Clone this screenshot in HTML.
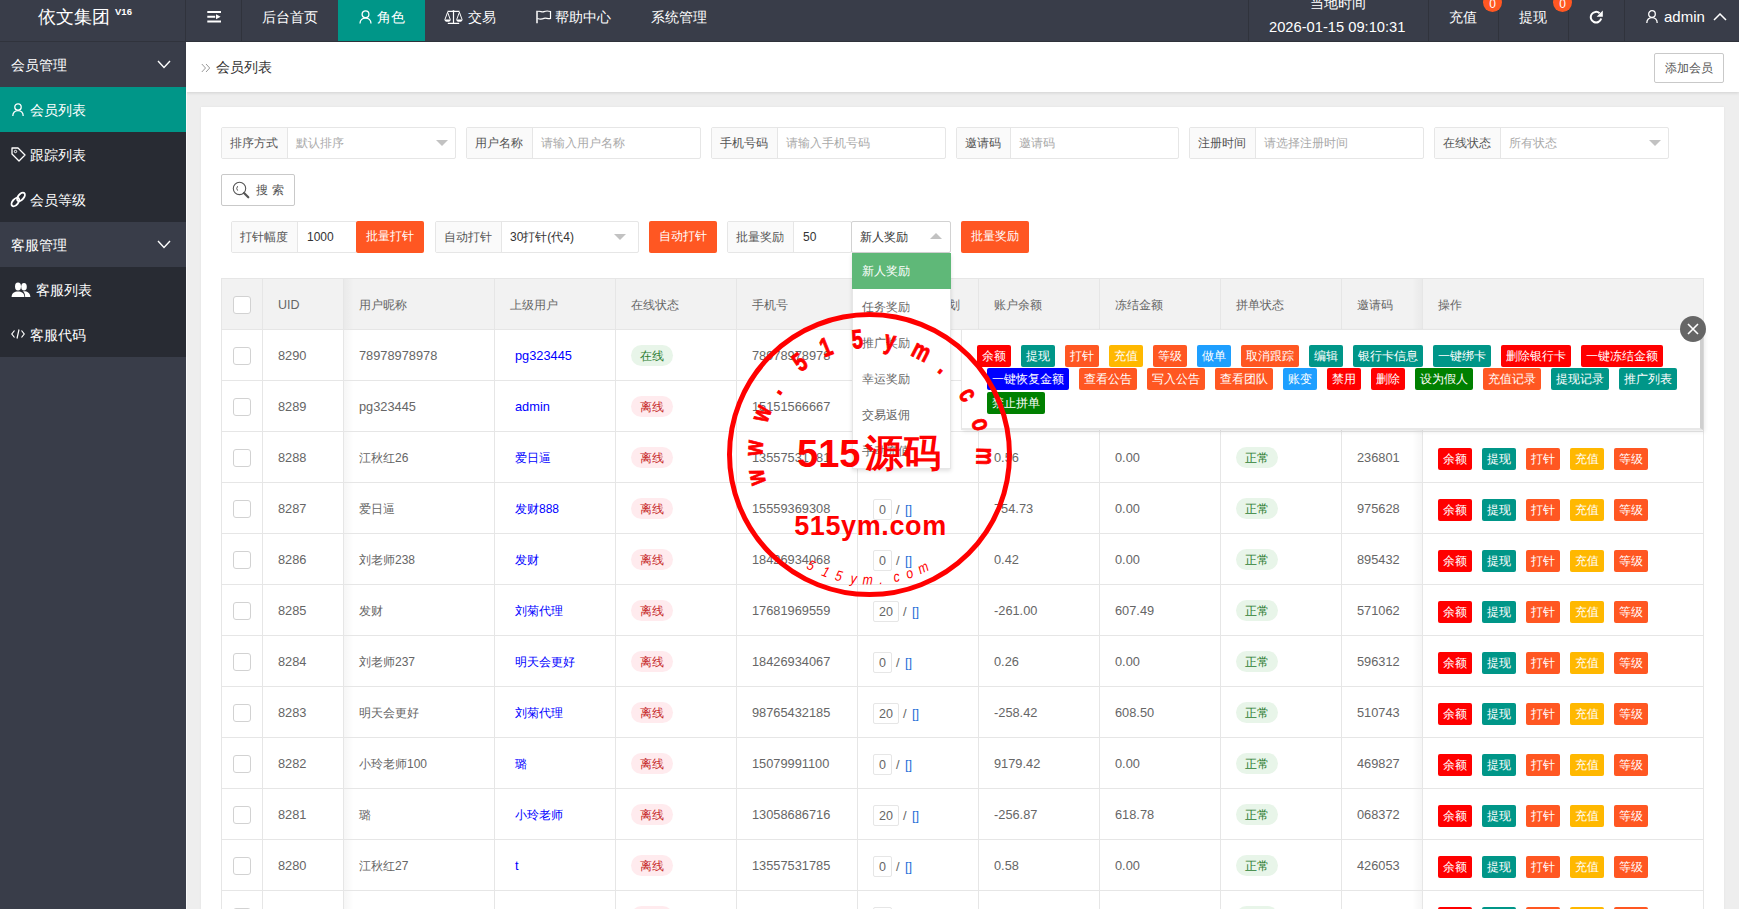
<!DOCTYPE html>
<html><head><meta charset="utf-8">
<style>
*{box-sizing:border-box;margin:0;padding:0}
html,body{width:1739px;height:909px;overflow:hidden;background:#eeeeee;font-family:"Liberation Sans",sans-serif;color:#666;font-size:12px}
.abs{position:absolute}
.hdr{left:0;top:0;width:1739px;height:42px;background:#393D49;border-bottom:1px solid #30333c}
.vl{position:absolute;top:0;width:1px;height:41px;background:#30333c}
.ht{position:absolute;color:#fff;font-size:14px;line-height:14px;white-space:nowrap}
.side{left:0;top:42px;width:186px;height:867px;background:#393D49}
.sg{position:absolute;left:0;width:186px;height:45px;background:#393D49}
.sc{position:absolute;left:0;width:186px;height:45px;background:#282B33}
.st{position:absolute;color:#fff;font-size:14px;line-height:14px;white-space:nowrap}
.crumb{left:186px;top:42px;width:1553px;height:50px;background:#fff;box-shadow:0 1px 3px rgba(0,0,0,.12)}
.card{left:201px;top:107px;width:1523px;height:820px;background:#fff;box-shadow:0 0 2px rgba(0,0,0,.06)}
.ig{position:absolute;height:32px;border:1px solid #e6e6e6;border-radius:2px;background:#fff;display:flex}
.ig .lb{background:#FAFAFA;border-right:1px solid #e6e6e6;color:#555;font-size:12px;line-height:30px;padding:0 8px;white-space:nowrap}
.ig .in{position:relative;color:#aaa;font-size:12px;line-height:30px;padding-left:8px;white-space:nowrap}
.tri{position:absolute;width:0;height:0;border-left:6px solid transparent;border-right:6px solid transparent;border-top:6px solid #c2c2c2}
.obtn{position:absolute;height:32px;background:#FF5722;color:#fff;font-size:12px;line-height:30px;text-align:center;border-radius:2px;white-space:nowrap}
</style></head><body>
<!-- HEADER -->
<div class="abs hdr"></div>
<div class="ht" style="left:38px;top:3px;font-size:18px;line-height:18px">依文集团 <sup style="font-size:9.5px;vertical-align:8px;font-weight:bold">V16</sup></div>
<div class="vl" style="left:185px"></div>
<div class="vl" style="left:241px"></div>
<!-- hamburger -->
<svg class="abs" style="left:207px;top:10px" width="15" height="14" viewBox="0 0 15 14"><path d="M0.3 2H14M0.3 6.7H8.2M0.3 11.5H14" stroke="#fff" stroke-width="2"/><path d="M9 4.2L13.6 6.7L9 9.2Z" fill="#fff"/></svg>
<div class="ht" style="left:262px;top:10px">后台首页</div>
<div class="abs" style="left:338px;top:0;width:87px;height:41px;background:#009688"></div>
<svg class="abs" style="left:359px;top:10px" width="13" height="14" viewBox="0 0 13 14"><circle cx="6.5" cy="4.2" r="3.4" fill="none" stroke="#fff" stroke-width="1.3"/><path d="M1 13.5C1 10 3.5 8 6.5 8S12 10 12 13.5" fill="none" stroke="#fff" stroke-width="1.3"/></svg>
<div class="ht" style="left:377px;top:10px">角色</div>
<svg class="abs" style="left:444px;top:10px" width="19" height="15" viewBox="0 0 19 15"><g fill="none" stroke="#fff"><path d="M3.5 1.3H15.5M9.5 0.6V13.4M3.8 13.4H15.2" stroke-width="1.2"/><path d="M0.9 9.6L3.6 2.2L6.3 9.6M12.7 9.6L15.4 2.2L18.1 9.6" stroke-width="1"/></g><path d="M0.5 9.4H6.7A3.1 2.3 0 0 1 0.5 9.4ZM12.3 9.4H18.5A3.1 2.3 0 0 1 12.3 9.4Z" fill="#fff"/><circle cx="9.5" cy="1.2" r="1" fill="#fff"/></svg>
<div class="ht" style="left:468px;top:10px">交易</div>
<svg class="abs" style="left:536px;top:10px" width="16" height="15" viewBox="0 0 16 15"><path d="M1 0.8V13.2" stroke="#fff" stroke-width="1.5"/><path d="M1.5 1.5C4 0.6 6 2.4 8 1.6S12 0.8 14.5 1.5V8.5C12 9.3 10 7.6 8 8.4S4 9.3 1.5 8.5" fill="none" stroke="#fff" stroke-width="1.2"/></svg>
<div class="ht" style="left:555px;top:10px">帮助中心</div>
<div class="ht" style="left:651px;top:10px">系统管理</div>
<!-- right header -->
<div class="vl" style="left:1248px"></div>
<div class="vl" style="left:1428px"></div>
<div class="vl" style="left:1498px"></div>
<div class="vl" style="left:1568px"></div>
<div class="vl" style="left:1624px"></div>
<div class="ht" style="left:1310px;top:-4px">当地时间</div>
<div class="ht" style="left:1269px;top:20px;font-size:14.7px;line-height:15px">2026-01-15 09:10:31</div>
<div class="ht" style="left:1449px;top:10px">充值</div>
<div class="abs" style="left:1483px;top:-7px;width:19px;height:19px;border-radius:50%;background:#FF5722;color:#fff;font-size:12px;line-height:22px;text-align:center">0</div>
<div class="ht" style="left:1519px;top:10px">提现</div>
<div class="abs" style="left:1553px;top:-7px;width:19px;height:19px;border-radius:50%;background:#FF5722;color:#fff;font-size:12px;line-height:22px;text-align:center">0</div>
<svg class="abs" style="left:1589px;top:10px" width="15" height="14" viewBox="0 0 15 14"><path d="M10.6 3.2A5.3 5.3 0 1 0 12.2 8.6" fill="none" stroke="#fff" stroke-width="2"/><path d="M13.8 0.6V6.8H7.6Z" fill="#fff"/></svg>
<svg class="abs" style="left:1646px;top:10px" width="12" height="13" viewBox="0 0 12 13"><circle cx="6" cy="4" r="3.3" fill="none" stroke="#fff" stroke-width="1.3"/><path d="M0.8 13C0.8 9.5 3 7.6 6 7.6S11.2 9.5 11.2 13" fill="none" stroke="#fff" stroke-width="1.3"/></svg>
<div class="ht" style="left:1664px;top:9px;font-size:15px;line-height:15px">admin</div>
<svg class="abs" style="left:1713px;top:13px" width="14" height="8" viewBox="0 0 14 8"><path d="M1 7L7 1L13 7" fill="none" stroke="#fff" stroke-width="1.5"/></svg>

<!-- SIDEBAR -->
<div class="abs side"></div>
<div class="sg" style="top:42px"></div>
<div class="st" style="left:11px;top:58px">会员管理</div>
<svg class="abs" style="left:157px;top:60px" width="14" height="9" viewBox="0 0 14 9"><path d="M1 1L7 7.5L13 1" fill="none" stroke="#fff" stroke-width="1.4"/></svg>
<div class="sc" style="top:87px;background:#009688"></div>
<svg class="abs" style="left:12px;top:103px" width="12" height="13" viewBox="0 0 12 13"><circle cx="6" cy="4" r="3.2" fill="none" stroke="#fff" stroke-width="1.3"/><path d="M0.8 13C0.8 9.5 3 7.6 6 7.6S11.2 9.5 11.2 13" fill="none" stroke="#fff" stroke-width="1.3"/></svg>
<div class="st" style="left:30px;top:103px">会员列表</div>
<div class="sc" style="top:132px"></div>
<svg class="abs" style="left:11px;top:147px" width="15" height="15" viewBox="0 0 15 15"><path d="M1 1H7L14 8L8 14L1 7Z" fill="none" stroke="#fff" stroke-width="1.3" stroke-linejoin="round"/><circle cx="4.5" cy="4.5" r="1.2" fill="none" stroke="#fff" stroke-width="1"/></svg>
<div class="st" style="left:30px;top:148px">跟踪列表</div>
<div class="sc" style="top:177px"></div>
<svg class="abs" style="left:8px;top:188px" width="22" height="22" viewBox="0 0 22 22"><g fill="none" stroke="#fff" stroke-width="1.9"><ellipse cx="7.4" cy="14" rx="5" ry="2.8" transform="rotate(-50 7.4 14)"/><ellipse cx="13" cy="8.9" rx="5" ry="2.8" transform="rotate(-50 13 8.9)"/></g></svg>
<div class="st" style="left:30px;top:193px">会员等级</div>
<div class="sg" style="top:222px"></div>
<div class="st" style="left:11px;top:238px">客服管理</div>
<svg class="abs" style="left:157px;top:240px" width="14" height="9" viewBox="0 0 14 9"><path d="M1 1L7 7.5L13 1" fill="none" stroke="#fff" stroke-width="1.4"/></svg>
<div class="sc" style="top:267px"></div>
<svg class="abs" style="left:11px;top:282px" width="20" height="16" viewBox="0 0 20 16"><ellipse cx="7" cy="4.6" rx="3" ry="4" fill="#fff"/><path d="M0.6 15C0.6 11 3.5 9.4 7 9.4S13.4 11 13.4 15Z" fill="#fff"/><ellipse cx="13" cy="4.8" rx="2.8" ry="3.8" fill="#fff"/><path d="M12 9.3C16 9 19.4 11 19.4 15H14.2C14 12.3 13.4 10.5 12 9.3Z" fill="#fff"/></svg>
<div class="st" style="left:36px;top:283px">客服列表</div>
<div class="sc" style="top:312px"></div>
<svg class="abs" style="left:11px;top:329px" width="14" height="10" viewBox="0 0 14 10"><path d="M3.5 1.5L0.8 5L3.5 8.5M10.5 1.5L13.2 5L10.5 8.5M8 0.5L6 9.5" fill="none" stroke="#fff" stroke-width="1.2"/></svg>
<div class="st" style="left:30px;top:328px">客服代码</div>

<!-- BREADCRUMB -->
<div class="abs crumb"></div>
<svg class="abs" style="left:201px;top:63px" width="10" height="10" viewBox="0 0 10 10"><path d="M0.8 1L4.5 5L0.8 9M5 1L8.7 5L5 9" fill="none" stroke="#999" stroke-width="1"/></svg>
<div class="abs" style="left:216px;top:60px;font-size:14px;line-height:14px;color:#333">会员列表</div>
<div class="abs" style="left:1654px;top:53px;width:70px;height:30px;border:1px solid #C9C9C9;border-radius:2px;background:#fff;color:#555;font-size:12px;line-height:28px;text-align:center">添加会员</div>

<!-- CARD -->
<div class="abs card"></div>
<div class="abs" style="left:186px;top:92px;width:1px;height:817px;background:#fafafa"></div>

<!-- FILTER ROW 1 -->
<div class="ig" style="left:221px;top:127px;width:235px"><div class="lb" style="width:66px;flex:none">排序方式</div><div class="in">默认排序<i class="tri" style="left:148px;top:12px"></i></div></div>
<div class="ig" style="left:466px;top:127px;width:235px"><div class="lb" style="width:66px;flex:none">用户名称</div><div class="in">请输入用户名称</div></div>
<div class="ig" style="left:711px;top:127px;width:235px"><div class="lb" style="width:66px;flex:none">手机号码</div><div class="in">请输入手机号码</div></div>
<div class="ig" style="left:956px;top:127px;width:223px"><div class="lb" style="width:54px;flex:none">邀请码</div><div class="in">邀请码</div></div>
<div class="ig" style="left:1189px;top:127px;width:235px"><div class="lb" style="width:66px;flex:none">注册时间</div><div class="in">请选择注册时间</div></div>
<div class="ig" style="left:1434px;top:127px;width:235px"><div class="lb" style="width:66px;flex:none">在线状态</div><div class="in">所有状态<i class="tri" style="left:148px;top:12px"></i></div></div>
<!-- search -->
<div class="abs" style="left:221px;top:174px;width:74px;height:32px;border:1px solid #C9C9C9;border-radius:2px;background:#fff"></div>
<svg class="abs" style="left:232px;top:181px" width="18" height="18" viewBox="0 0 18 18"><circle cx="7.5" cy="7.4" r="6.2" fill="none" stroke="#555" stroke-width="1.1"/><path d="M12 12L16.3 16.3" stroke="#555" stroke-width="2.2" stroke-linecap="round"/><path d="M5.6 5.2A3.5 3.5 0 0 0 5.6 9.6" fill="none" stroke="#555" stroke-width="1"/></svg>
<div class="abs" style="left:256px;top:183px;font-size:12px;line-height:14px;color:#555;letter-spacing:4px">搜索</div>

<!-- FILTER ROW 2 -->
<div class="ig" style="left:231px;top:221px;width:126px"><div class="lb" style="width:66px;flex:none">打针幅度</div><div class="in" style="color:#333;padding-left:9px">1000</div></div>
<div class="obtn" style="left:356px;top:221px;width:68px">批量打针</div>
<div class="ig" style="left:435px;top:221px;width:204px"><div class="lb" style="width:66px;flex:none">自动打针</div><div class="in" style="color:#333">30打针(代4)<i class="tri" style="left:112px;top:12px"></i></div></div>
<div class="obtn" style="left:649px;top:221px;width:68px">自动打针</div>
<div class="ig" style="left:727px;top:221px;width:125px"><div class="lb" style="width:66px;flex:none">批量奖励</div><div class="in" style="color:#333;padding-left:9px">50</div></div>
<div class="ig" style="left:851px;top:221px;width:100px;border-color:#d2d2d2"><div class="in" style="color:#333;padding-left:8px">新人奖励</div><i class="tri" style="left:78px;top:11px;border-top:none;border-bottom:6px solid #c2c2c2"></i></div>
<div class="obtn" style="left:961px;top:221px;width:68px">批量奖励</div>


<style>
.hl{position:absolute;height:1px;background:#e6e6e6}
.vln{position:absolute;width:1px;background:#e6e6e6}
.tx{position:absolute;font-size:12.8px;line-height:14px;color:#666;white-space:nowrap}
.th{position:absolute;font-size:12px;line-height:14px;color:#666;white-space:nowrap}
.lk{color:#0000FF}
.cb{position:absolute;width:18px;height:18px;border:1.5px solid #d2d2d2;border-radius:3px;background:#fff}
.bdg{position:absolute;width:42px;height:21px;border-radius:11px;font-size:12px;line-height:23px;text-align:center}
.on{background:#E8F5E9;color:#2E7D32}
.off{background:#FFEBEE;color:#C62828}
.b{position:absolute;height:22px;color:#fff;font-size:12px;line-height:22px;text-align:center;border-radius:2px;white-space:nowrap}
.ipt{position:absolute;height:21px;border:1px solid #e6e6e6;border-radius:2px;font-size:12.5px;line-height:21px;color:#666;text-align:center;background:#fff}
</style>

<div class="abs" style="left:221px;top:278px;width:1483px;height:631px;background:#fff"></div>
<div class="abs" style="left:222px;top:279px;width:1481px;height:50px;background:#F2F2F2"></div>
<div class="abs" style="left:344px;top:279px;width:10px;height:630px;background:linear-gradient(to right,rgba(0,0,0,.035),rgba(0,0,0,0))"></div>
<div class="abs" style="left:1412px;top:279px;width:10px;height:630px;background:linear-gradient(to left,rgba(0,0,0,.035),rgba(0,0,0,0))"></div>
<div class="hl" style="left:221px;top:278px;width:1483px"></div>
<div class="hl" style="left:221px;top:329px;width:1483px"></div>
<div class="hl" style="left:221px;top:380px;width:1483px"></div>
<div class="hl" style="left:221px;top:431px;width:1483px"></div>
<div class="hl" style="left:221px;top:482px;width:1483px"></div>
<div class="hl" style="left:221px;top:533px;width:1483px"></div>
<div class="hl" style="left:221px;top:584px;width:1483px"></div>
<div class="hl" style="left:221px;top:635px;width:1483px"></div>
<div class="hl" style="left:221px;top:686px;width:1483px"></div>
<div class="hl" style="left:221px;top:737px;width:1483px"></div>
<div class="hl" style="left:221px;top:788px;width:1483px"></div>
<div class="hl" style="left:221px;top:839px;width:1483px"></div>
<div class="hl" style="left:221px;top:890px;width:1483px"></div>
<div class="vln" style="left:221px;top:278px;height:631px"></div>
<div class="vln" style="left:262px;top:278px;height:631px"></div>
<div class="vln" style="left:343px;top:278px;height:631px"></div>
<div class="vln" style="left:494px;top:278px;height:631px"></div>
<div class="vln" style="left:615px;top:278px;height:631px"></div>
<div class="vln" style="left:736px;top:278px;height:631px"></div>
<div class="vln" style="left:857px;top:278px;height:631px"></div>
<div class="vln" style="left:978px;top:278px;height:631px"></div>
<div class="vln" style="left:1099px;top:278px;height:631px"></div>
<div class="vln" style="left:1220px;top:278px;height:631px"></div>
<div class="vln" style="left:1341px;top:278px;height:631px"></div>
<div class="vln" style="left:1422px;top:278px;height:631px"></div>
<div class="vln" style="left:1703px;top:278px;height:631px"></div>
<div class="cb" style="left:233px;top:296px"></div>
<div class="th" style="left:278px;top:298px;font-size:12.5px">UID</div>
<div class="th" style="left:359px;top:298px;font-size:12px">用户昵称</div>
<div class="th" style="left:510px;top:298px;font-size:12px">上级用户</div>
<div class="th" style="left:631px;top:298px;font-size:12px">在线状态</div>
<div class="th" style="left:752px;top:298px;font-size:12px">手机号</div>
<div class="th" style="left:873px;top:298px;font-size:12px">已打针/打针计划</div>
<div class="th" style="left:994px;top:298px;font-size:12px">账户余额</div>
<div class="th" style="left:1115px;top:298px;font-size:12px">冻结金额</div>
<div class="th" style="left:1236px;top:298px;font-size:12px">拼单状态</div>
<div class="th" style="left:1357px;top:298px;font-size:12px">邀请码</div>
<div class="th" style="left:1438px;top:298px;font-size:12px">操作</div>
<div class="cb" style="left:233px;top:347px"></div>
<div class="tx" style="left:278px;top:349px">8290</div>
<div class="tx" style="left:359px;top:349px;font-size:12.8px">78978978978</div>
<div class="tx lk" style="left:515px;top:349px;font-size:12.8px">pg323445</div>
<div class="bdg on" style="left:631px;top:345px">在线</div>
<div class="tx" style="left:752px;top:349px">78978978978</div>
<div class="ipt" style="left:873px;top:346px;width:19px">0</div>
<div class="tx" style="left:896px;top:350px">/</div>
<div class="tx" style="left:905px;top:350px;color:#1F6FD8">[]</div>
<div class="tx" style="left:994px;top:349px">0.00</div>
<div class="tx" style="left:1115px;top:349px">0.00</div>
<div class="bdg on" style="left:1236px;top:345px">正常</div>
<div class="tx" style="left:1357px;top:349px">236801</div>
<div class="b" style="left:1438px;top:346px;width:34px;background:#FF0000">余额</div>
<div class="b" style="left:1482px;top:346px;width:34px;background:#009688">提现</div>
<div class="b" style="left:1526px;top:346px;width:34px;background:#FF5722">打针</div>
<div class="b" style="left:1570px;top:346px;width:34px;background:#FFB800">充值</div>
<div class="b" style="left:1614px;top:346px;width:34px;background:#FF5722">等级</div>
<div class="cb" style="left:233px;top:398px"></div>
<div class="tx" style="left:278px;top:400px">8289</div>
<div class="tx" style="left:359px;top:400px;font-size:12.8px">pg323445</div>
<div class="tx lk" style="left:515px;top:400px;font-size:12.8px">admin</div>
<div class="bdg off" style="left:631px;top:396px">离线</div>
<div class="tx" style="left:752px;top:400px">15151566667</div>
<div class="ipt" style="left:873px;top:397px;width:19px">0</div>
<div class="tx" style="left:896px;top:401px">/</div>
<div class="tx" style="left:905px;top:401px;color:#1F6FD8">[]</div>
<div class="tx" style="left:994px;top:400px">0.00</div>
<div class="tx" style="left:1115px;top:400px">0.00</div>
<div class="bdg on" style="left:1236px;top:396px">正常</div>
<div class="tx" style="left:1357px;top:400px">236801</div>
<div class="b" style="left:1438px;top:397px;width:34px;background:#FF0000">余额</div>
<div class="b" style="left:1482px;top:397px;width:34px;background:#009688">提现</div>
<div class="b" style="left:1526px;top:397px;width:34px;background:#FF5722">打针</div>
<div class="b" style="left:1570px;top:397px;width:34px;background:#FFB800">充值</div>
<div class="b" style="left:1614px;top:397px;width:34px;background:#FF5722">等级</div>
<div class="cb" style="left:233px;top:449px"></div>
<div class="tx" style="left:278px;top:451px">8288</div>
<div class="tx" style="left:359px;top:451px;font-size:12px">江秋红26</div>
<div class="tx lk" style="left:515px;top:451px;font-size:12px">爱日逼</div>
<div class="bdg off" style="left:631px;top:447px">离线</div>
<div class="tx" style="left:752px;top:451px">13557531781</div>
<div class="ipt" style="left:873px;top:448px;width:19px">0</div>
<div class="tx" style="left:896px;top:452px">/</div>
<div class="tx" style="left:905px;top:452px;color:#1F6FD8">[]</div>
<div class="tx" style="left:994px;top:451px">0.56</div>
<div class="tx" style="left:1115px;top:451px">0.00</div>
<div class="bdg on" style="left:1236px;top:447px">正常</div>
<div class="tx" style="left:1357px;top:451px">236801</div>
<div class="b" style="left:1438px;top:448px;width:34px;background:#FF0000">余额</div>
<div class="b" style="left:1482px;top:448px;width:34px;background:#009688">提现</div>
<div class="b" style="left:1526px;top:448px;width:34px;background:#FF5722">打针</div>
<div class="b" style="left:1570px;top:448px;width:34px;background:#FFB800">充值</div>
<div class="b" style="left:1614px;top:448px;width:34px;background:#FF5722">等级</div>
<div class="cb" style="left:233px;top:500px"></div>
<div class="tx" style="left:278px;top:502px">8287</div>
<div class="tx" style="left:359px;top:502px;font-size:12px">爱日逼</div>
<div class="tx lk" style="left:515px;top:502px;font-size:12px">发财888</div>
<div class="bdg off" style="left:631px;top:498px">离线</div>
<div class="tx" style="left:752px;top:502px">15559369308</div>
<div class="ipt" style="left:873px;top:499px;width:19px">0</div>
<div class="tx" style="left:896px;top:503px">/</div>
<div class="tx" style="left:905px;top:503px;color:#1F6FD8">[]</div>
<div class="tx" style="left:994px;top:502px">754.73</div>
<div class="tx" style="left:1115px;top:502px">0.00</div>
<div class="bdg on" style="left:1236px;top:498px">正常</div>
<div class="tx" style="left:1357px;top:502px">975628</div>
<div class="b" style="left:1438px;top:499px;width:34px;background:#FF0000">余额</div>
<div class="b" style="left:1482px;top:499px;width:34px;background:#009688">提现</div>
<div class="b" style="left:1526px;top:499px;width:34px;background:#FF5722">打针</div>
<div class="b" style="left:1570px;top:499px;width:34px;background:#FFB800">充值</div>
<div class="b" style="left:1614px;top:499px;width:34px;background:#FF5722">等级</div>
<div class="cb" style="left:233px;top:551px"></div>
<div class="tx" style="left:278px;top:553px">8286</div>
<div class="tx" style="left:359px;top:553px;font-size:12px">刘老师238</div>
<div class="tx lk" style="left:515px;top:553px;font-size:12px">发财</div>
<div class="bdg off" style="left:631px;top:549px">离线</div>
<div class="tx" style="left:752px;top:553px">18426934068</div>
<div class="ipt" style="left:873px;top:550px;width:19px">0</div>
<div class="tx" style="left:896px;top:554px">/</div>
<div class="tx" style="left:905px;top:554px;color:#1F6FD8">[]</div>
<div class="tx" style="left:994px;top:553px">0.42</div>
<div class="tx" style="left:1115px;top:553px">0.00</div>
<div class="bdg on" style="left:1236px;top:549px">正常</div>
<div class="tx" style="left:1357px;top:553px">895432</div>
<div class="b" style="left:1438px;top:550px;width:34px;background:#FF0000">余额</div>
<div class="b" style="left:1482px;top:550px;width:34px;background:#009688">提现</div>
<div class="b" style="left:1526px;top:550px;width:34px;background:#FF5722">打针</div>
<div class="b" style="left:1570px;top:550px;width:34px;background:#FFB800">充值</div>
<div class="b" style="left:1614px;top:550px;width:34px;background:#FF5722">等级</div>
<div class="cb" style="left:233px;top:602px"></div>
<div class="tx" style="left:278px;top:604px">8285</div>
<div class="tx" style="left:359px;top:604px;font-size:12px">发财</div>
<div class="tx lk" style="left:515px;top:604px;font-size:12px">刘菊代理</div>
<div class="bdg off" style="left:631px;top:600px">离线</div>
<div class="tx" style="left:752px;top:604px">17681969559</div>
<div class="ipt" style="left:873px;top:601px;width:26px">20</div>
<div class="tx" style="left:903px;top:605px">/</div>
<div class="tx" style="left:912px;top:605px;color:#1F6FD8">[]</div>
<div class="tx" style="left:994px;top:604px">-261.00</div>
<div class="tx" style="left:1115px;top:604px">607.49</div>
<div class="bdg on" style="left:1236px;top:600px">正常</div>
<div class="tx" style="left:1357px;top:604px">571062</div>
<div class="b" style="left:1438px;top:601px;width:34px;background:#FF0000">余额</div>
<div class="b" style="left:1482px;top:601px;width:34px;background:#009688">提现</div>
<div class="b" style="left:1526px;top:601px;width:34px;background:#FF5722">打针</div>
<div class="b" style="left:1570px;top:601px;width:34px;background:#FFB800">充值</div>
<div class="b" style="left:1614px;top:601px;width:34px;background:#FF5722">等级</div>
<div class="cb" style="left:233px;top:653px"></div>
<div class="tx" style="left:278px;top:655px">8284</div>
<div class="tx" style="left:359px;top:655px;font-size:12px">刘老师237</div>
<div class="tx lk" style="left:515px;top:655px;font-size:12px">明天会更好</div>
<div class="bdg off" style="left:631px;top:651px">离线</div>
<div class="tx" style="left:752px;top:655px">18426934067</div>
<div class="ipt" style="left:873px;top:652px;width:19px">0</div>
<div class="tx" style="left:896px;top:656px">/</div>
<div class="tx" style="left:905px;top:656px;color:#1F6FD8">[]</div>
<div class="tx" style="left:994px;top:655px">0.26</div>
<div class="tx" style="left:1115px;top:655px">0.00</div>
<div class="bdg on" style="left:1236px;top:651px">正常</div>
<div class="tx" style="left:1357px;top:655px">596312</div>
<div class="b" style="left:1438px;top:652px;width:34px;background:#FF0000">余额</div>
<div class="b" style="left:1482px;top:652px;width:34px;background:#009688">提现</div>
<div class="b" style="left:1526px;top:652px;width:34px;background:#FF5722">打针</div>
<div class="b" style="left:1570px;top:652px;width:34px;background:#FFB800">充值</div>
<div class="b" style="left:1614px;top:652px;width:34px;background:#FF5722">等级</div>
<div class="cb" style="left:233px;top:704px"></div>
<div class="tx" style="left:278px;top:706px">8283</div>
<div class="tx" style="left:359px;top:706px;font-size:12px">明天会更好</div>
<div class="tx lk" style="left:515px;top:706px;font-size:12px">刘菊代理</div>
<div class="bdg off" style="left:631px;top:702px">离线</div>
<div class="tx" style="left:752px;top:706px">98765432185</div>
<div class="ipt" style="left:873px;top:703px;width:26px">20</div>
<div class="tx" style="left:903px;top:707px">/</div>
<div class="tx" style="left:912px;top:707px;color:#1F6FD8">[]</div>
<div class="tx" style="left:994px;top:706px">-258.42</div>
<div class="tx" style="left:1115px;top:706px">608.50</div>
<div class="bdg on" style="left:1236px;top:702px">正常</div>
<div class="tx" style="left:1357px;top:706px">510743</div>
<div class="b" style="left:1438px;top:703px;width:34px;background:#FF0000">余额</div>
<div class="b" style="left:1482px;top:703px;width:34px;background:#009688">提现</div>
<div class="b" style="left:1526px;top:703px;width:34px;background:#FF5722">打针</div>
<div class="b" style="left:1570px;top:703px;width:34px;background:#FFB800">充值</div>
<div class="b" style="left:1614px;top:703px;width:34px;background:#FF5722">等级</div>
<div class="cb" style="left:233px;top:755px"></div>
<div class="tx" style="left:278px;top:757px">8282</div>
<div class="tx" style="left:359px;top:757px;font-size:12px">小玲老师100</div>
<div class="tx lk" style="left:515px;top:757px;font-size:12px">璐</div>
<div class="bdg off" style="left:631px;top:753px">离线</div>
<div class="tx" style="left:752px;top:757px">15079991100</div>
<div class="ipt" style="left:873px;top:754px;width:19px">0</div>
<div class="tx" style="left:896px;top:758px">/</div>
<div class="tx" style="left:905px;top:758px;color:#1F6FD8">[]</div>
<div class="tx" style="left:994px;top:757px">9179.42</div>
<div class="tx" style="left:1115px;top:757px">0.00</div>
<div class="bdg on" style="left:1236px;top:753px">正常</div>
<div class="tx" style="left:1357px;top:757px">469827</div>
<div class="b" style="left:1438px;top:754px;width:34px;background:#FF0000">余额</div>
<div class="b" style="left:1482px;top:754px;width:34px;background:#009688">提现</div>
<div class="b" style="left:1526px;top:754px;width:34px;background:#FF5722">打针</div>
<div class="b" style="left:1570px;top:754px;width:34px;background:#FFB800">充值</div>
<div class="b" style="left:1614px;top:754px;width:34px;background:#FF5722">等级</div>
<div class="cb" style="left:233px;top:806px"></div>
<div class="tx" style="left:278px;top:808px">8281</div>
<div class="tx" style="left:359px;top:808px;font-size:12px">璐</div>
<div class="tx lk" style="left:515px;top:808px;font-size:12px">小玲老师</div>
<div class="bdg off" style="left:631px;top:804px">离线</div>
<div class="tx" style="left:752px;top:808px">13058686716</div>
<div class="ipt" style="left:873px;top:805px;width:26px">20</div>
<div class="tx" style="left:903px;top:809px">/</div>
<div class="tx" style="left:912px;top:809px;color:#1F6FD8">[]</div>
<div class="tx" style="left:994px;top:808px">-256.87</div>
<div class="tx" style="left:1115px;top:808px">618.78</div>
<div class="bdg on" style="left:1236px;top:804px">正常</div>
<div class="tx" style="left:1357px;top:808px">068372</div>
<div class="b" style="left:1438px;top:805px;width:34px;background:#FF0000">余额</div>
<div class="b" style="left:1482px;top:805px;width:34px;background:#009688">提现</div>
<div class="b" style="left:1526px;top:805px;width:34px;background:#FF5722">打针</div>
<div class="b" style="left:1570px;top:805px;width:34px;background:#FFB800">充值</div>
<div class="b" style="left:1614px;top:805px;width:34px;background:#FF5722">等级</div>
<div class="cb" style="left:233px;top:857px"></div>
<div class="tx" style="left:278px;top:859px">8280</div>
<div class="tx" style="left:359px;top:859px;font-size:12px">江秋红27</div>
<div class="tx lk" style="left:515px;top:859px;font-size:12.8px">t</div>
<div class="bdg off" style="left:631px;top:855px">离线</div>
<div class="tx" style="left:752px;top:859px">13557531785</div>
<div class="ipt" style="left:873px;top:856px;width:19px">0</div>
<div class="tx" style="left:896px;top:860px">/</div>
<div class="tx" style="left:905px;top:860px;color:#1F6FD8">[]</div>
<div class="tx" style="left:994px;top:859px">0.58</div>
<div class="tx" style="left:1115px;top:859px">0.00</div>
<div class="bdg on" style="left:1236px;top:855px">正常</div>
<div class="tx" style="left:1357px;top:859px">426053</div>
<div class="b" style="left:1438px;top:856px;width:34px;background:#FF0000">余额</div>
<div class="b" style="left:1482px;top:856px;width:34px;background:#009688">提现</div>
<div class="b" style="left:1526px;top:856px;width:34px;background:#FF5722">打针</div>
<div class="b" style="left:1570px;top:856px;width:34px;background:#FFB800">充值</div>
<div class="b" style="left:1614px;top:856px;width:34px;background:#FF5722">等级</div>
<div class="cb" style="left:233px;top:908px"></div>
<div class="tx" style="left:278px;top:910px">8279</div>
<div class="tx" style="left:359px;top:910px;font-size:12px">江秋红28</div>
<div class="tx lk" style="left:515px;top:910px;font-size:12.8px">t</div>
<div class="bdg off" style="left:631px;top:906px">离线</div>
<div class="tx" style="left:752px;top:910px">13557531786</div>
<div class="ipt" style="left:873px;top:907px;width:19px">0</div>
<div class="tx" style="left:896px;top:911px">/</div>
<div class="tx" style="left:905px;top:911px;color:#1F6FD8">[]</div>
<div class="tx" style="left:994px;top:910px">0.00</div>
<div class="tx" style="left:1115px;top:910px">0.00</div>
<div class="bdg on" style="left:1236px;top:906px">正常</div>
<div class="tx" style="left:1357px;top:910px">426054</div>
<div class="b" style="left:1438px;top:907px;width:34px;background:#FF0000">余额</div>
<div class="b" style="left:1482px;top:907px;width:34px;background:#009688">提现</div>
<div class="b" style="left:1526px;top:907px;width:34px;background:#FF5722">打针</div>
<div class="b" style="left:1570px;top:907px;width:34px;background:#FFB800">充值</div>
<div class="b" style="left:1614px;top:907px;width:34px;background:#FF5722">等级</div>
<div class="abs" style="left:852px;top:253px;width:99px;height:216px;background:#fff;border:1px solid #e6e6e6;border-top:none;box-shadow:0 2px 4px rgba(0,0,0,.12)"></div>
<div class="abs" style="left:852px;top:253px;width:99px;height:36px;background:#5FB878"></div>
<div class="abs" style="left:862px;top:264px;font-size:12px;line-height:14px;color:#fff;white-space:nowrap">新人奖励</div>
<div class="abs" style="left:862px;top:300px;font-size:12px;line-height:14px;color:#666;white-space:nowrap">任务奖励</div>
<div class="abs" style="left:862px;top:336px;font-size:12px;line-height:14px;color:#666;white-space:nowrap">推广奖励</div>
<div class="abs" style="left:862px;top:372px;font-size:12px;line-height:14px;color:#666;white-space:nowrap">幸运奖励</div>
<div class="abs" style="left:862px;top:408px;font-size:12px;line-height:14px;color:#666;white-space:nowrap">交易返佣</div>
<div class="abs" style="left:862px;top:444px;font-size:12px;line-height:14px;color:#666;white-space:nowrap">手动充值</div>
<div class="abs" style="left:961px;top:329px;width:742px;height:101px;background:#fff;border:1px solid #e6e6e6;border-right:3px solid #cfcfcf;border-bottom:2px solid #e8e8e8;box-shadow:2px 2px 4px rgba(0,0,0,.08)"></div>
<div class="b" style="left:977px;top:345px;width:34px;background:#FF0000">余额</div>
<div class="b" style="left:1021px;top:345px;width:34px;background:#009688">提现</div>
<div class="b" style="left:1065px;top:345px;width:34px;background:#FF5722">打针</div>
<div class="b" style="left:1109px;top:345px;width:34px;background:#FFB800">充值</div>
<div class="b" style="left:1153px;top:345px;width:34px;background:#FF5722">等级</div>
<div class="b" style="left:1197px;top:345px;width:34px;background:#1E9FFF">做单</div>
<div class="b" style="left:1241px;top:345px;width:58px;background:#FF5722">取消跟踪</div>
<div class="b" style="left:1309px;top:345px;width:34px;background:#009688">编辑</div>
<div class="b" style="left:1353px;top:345px;width:70px;background:#009688">银行卡信息</div>
<div class="b" style="left:1433px;top:345px;width:58px;background:#009688">一键绑卡</div>
<div class="b" style="left:1501px;top:345px;width:70px;background:#FF0000">删除银行卡</div>
<div class="b" style="left:1581px;top:345px;width:82px;background:#FF0000">一键冻结金额</div>
<div class="b" style="left:987px;top:368px;width:82px;background:#0000FF">一键恢复金额</div>
<div class="b" style="left:1079px;top:368px;width:58px;background:#FF5722">查看公告</div>
<div class="b" style="left:1147px;top:368px;width:58px;background:#FF5722">写入公告</div>
<div class="b" style="left:1215px;top:368px;width:58px;background:#FF5722">查看团队</div>
<div class="b" style="left:1283px;top:368px;width:34px;background:#1E9FFF">账变</div>
<div class="b" style="left:1327px;top:368px;width:34px;background:#FF0000">禁用</div>
<div class="b" style="left:1371px;top:368px;width:34px;background:#FF0000">删除</div>
<div class="b" style="left:1415px;top:368px;width:58px;background:#008000">设为假人</div>
<div class="b" style="left:1483px;top:368px;width:58px;background:#FF5722">充值记录</div>
<div class="b" style="left:1551px;top:368px;width:58px;background:#009688">提现记录</div>
<div class="b" style="left:1619px;top:368px;width:58px;background:#009688">推广列表</div>
<div class="b" style="left:987px;top:392px;width:58px;background:#008000">禁止拼单</div>
<svg class="abs" style="left:1680px;top:316px" width="26" height="26" viewBox="0 0 26 26"><circle cx="13" cy="13" r="13" fill="#666"/><path d="M8 8L18 18M18 8L8 18" stroke="#fff" stroke-width="1.6"/></svg>
<svg class="abs" style="left:0;top:0" width="1739" height="909" viewBox="0 0 1739 909">
<circle cx="869.5" cy="454.6" r="140" fill="none" stroke="#FF0000" stroke-width="5"/>
<text x="797" y="467" fill="#FF0000" font-family="Liberation Sans, sans-serif" font-weight="bold" font-size="38">515</text>
<text x="865" y="466" fill="#FF0000" font-family="Liberation Sans, sans-serif" font-weight="bold" font-size="38">源码</text>
<text x="870.5" y="534.5" text-anchor="middle" fill="#FF0000" font-family="Liberation Sans, sans-serif" font-weight="bold" font-size="27" letter-spacing="0.6">515ym.com</text>
<text transform="translate(764.6 475.9) rotate(258.5) scale(0.74 1)" text-anchor="middle" fill="#FF0000" stroke="#FF0000" stroke-width="0.9" font-family="Liberation Sans, sans-serif" font-weight="bold" font-size="26.5">w</text>
<text transform="translate(762.7 448.4) rotate(273.3) scale(0.74 1)" text-anchor="middle" fill="#FF0000" stroke="#FF0000" stroke-width="0.9" font-family="Liberation Sans, sans-serif" font-weight="bold" font-size="26.5">w</text>
<text transform="translate(769.5 416.6) rotate(290.8) scale(0.74 1)" text-anchor="middle" fill="#FF0000" stroke="#FF0000" stroke-width="0.9" font-family="Liberation Sans, sans-serif" font-weight="bold" font-size="26.5">w</text>
<text transform="translate(781.4 393.8) rotate(304.6) scale(0.74 1)" text-anchor="middle" fill="#FF0000" stroke="#FF0000" stroke-width="0.9" font-family="Liberation Sans, sans-serif" font-weight="bold" font-size="26.5">.</text>
<text transform="translate(805.0 369.3) rotate(322.9) scale(0.74 1)" text-anchor="middle" fill="#FF0000" stroke="#FF0000" stroke-width="0.9" font-family="Liberation Sans, sans-serif" font-weight="bold" font-size="26.5">5</text>
<text transform="translate(829.4 355.4) rotate(338.0) scale(0.74 1)" text-anchor="middle" fill="#FF0000" stroke="#FF0000" stroke-width="0.9" font-family="Liberation Sans, sans-serif" font-weight="bold" font-size="26.5">1</text>
<text transform="translate(858.3 348.2) rotate(354.0) scale(0.74 1)" text-anchor="middle" fill="#FF0000" stroke="#FF0000" stroke-width="0.9" font-family="Liberation Sans, sans-serif" font-weight="bold" font-size="26.5">5</text>
<text transform="translate(888.6 349.3) rotate(370.3) scale(0.74 1)" text-anchor="middle" fill="#FF0000" stroke="#FF0000" stroke-width="0.9" font-family="Liberation Sans, sans-serif" font-weight="bold" font-size="26.5">y</text>
<text transform="translate(917.6 359.0) rotate(386.7) scale(0.74 1)" text-anchor="middle" fill="#FF0000" stroke="#FF0000" stroke-width="0.9" font-family="Liberation Sans, sans-serif" font-weight="bold" font-size="26.5">m</text>
<text transform="translate(938.8 373.1) rotate(400.4) scale(0.74 1)" text-anchor="middle" fill="#FF0000" stroke="#FF0000" stroke-width="0.9" font-family="Liberation Sans, sans-serif" font-weight="bold" font-size="26.5">.</text>
<text transform="translate(960.9 399.0) rotate(418.7) scale(0.74 1)" text-anchor="middle" fill="#FF0000" stroke="#FF0000" stroke-width="0.9" font-family="Liberation Sans, sans-serif" font-weight="bold" font-size="26.5">c</text>
<text transform="translate(972.8 426.5) rotate(434.8) scale(0.74 1)" text-anchor="middle" fill="#FF0000" stroke="#FF0000" stroke-width="0.9" font-family="Liberation Sans, sans-serif" font-weight="bold" font-size="26.5">o</text>
<text transform="translate(976.5 456.3) rotate(450.9) scale(0.74 1)" text-anchor="middle" fill="#FF0000" stroke="#FF0000" stroke-width="0.9" font-family="Liberation Sans, sans-serif" font-weight="bold" font-size="26.5">m</text>
<text transform="translate(808.9 569.6) rotate(27.8) scale(0.85 1)" text-anchor="middle" fill="#FF0000" font-family="Liberation Sans, sans-serif" font-style="italic" font-size="14.5">5</text>
<text transform="translate(824.0 576.4) rotate(20.5) scale(0.85 1)" text-anchor="middle" fill="#FF0000" font-family="Liberation Sans, sans-serif" font-style="italic" font-size="14.5">1</text>
<text transform="translate(837.6 580.6) rotate(14.2) scale(0.85 1)" text-anchor="middle" fill="#FF0000" font-family="Liberation Sans, sans-serif" font-style="italic" font-size="14.5">5</text>
<text transform="translate(853.0 583.5) rotate(7.3) scale(0.85 1)" text-anchor="middle" fill="#FF0000" font-family="Liberation Sans, sans-serif" font-style="italic" font-size="14.5">y</text>
<text transform="translate(867.7 584.6) rotate(0.8) scale(0.85 1)" text-anchor="middle" fill="#FF0000" font-family="Liberation Sans, sans-serif" font-style="italic" font-size="14.5">m</text>
<text transform="translate(881.1 584.1) rotate(-5.1) scale(0.85 1)" text-anchor="middle" fill="#FF0000" font-family="Liberation Sans, sans-serif" font-style="italic" font-size="14.5">.</text>
<text transform="translate(897.4 581.6) rotate(-12.4) scale(0.85 1)" text-anchor="middle" fill="#FF0000" font-family="Liberation Sans, sans-serif" font-style="italic" font-size="14.5">c</text>
<text transform="translate(911.0 577.8) rotate(-18.6) scale(0.85 1)" text-anchor="middle" fill="#FF0000" font-family="Liberation Sans, sans-serif" font-style="italic" font-size="14.5">o</text>
<text transform="translate(925.1 572.1) rotate(-25.3) scale(0.85 1)" text-anchor="middle" fill="#FF0000" font-family="Liberation Sans, sans-serif" font-style="italic" font-size="14.5">m</text>
</svg>
</body></html>
